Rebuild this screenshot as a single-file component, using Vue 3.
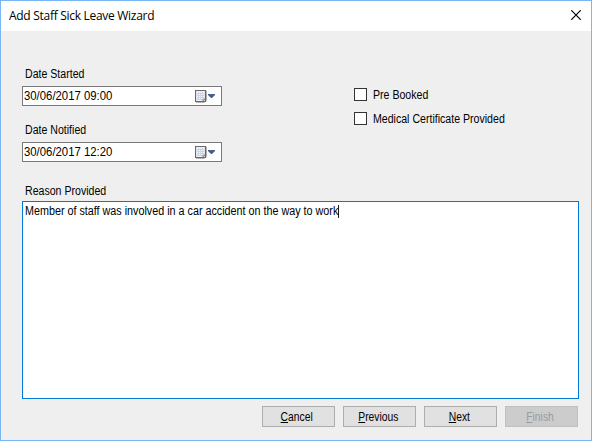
<script setup>
import { ref } from 'vue'

const dates = [
  { label: 'Date Started', value: '30/06/2017 09:00' },
  { label: 'Date Notified', value: '30/06/2017 12:20' },
]
const checks = ['Pre Booked', 'Medical Certificate Provided']
const buttons = [
  { key: 'C', rest: 'ancel' },
  { key: 'P', rest: 'revious' },
  { key: 'N', rest: 'ext' },
  { key: 'F', rest: 'inish', disabled: true },
]
const reason = ref('Member of staff was involved in a car accident on the way to work')
const dots = [0, 1, 2, 3].flatMap((r) => [0, 1, 2, 3].map((c) => ({ x: 2 + c * 2, y: 2 + r * 2 })))
</script>

<template>
  <div class="window">
    <header class="titlebar">
      <span class="title">Add Staff Sick Leave Wizard</span>
      <svg class="close" width="10" height="10" viewBox="0 0 10 10">
        <path d="M0.2 0.2L9.8 9.8M9.8 0.2L0.2 9.8" stroke="#000" stroke-width="1.2" />
      </svg>
    </header>
    <main class="body">
      <div class="top">
        <div class="dates">
          <div v-for="d in dates" :key="d.label" class="field">
            <label class="label"><span class="narrow">{{ d.label }}</span></label>
            <div class="datebox">
              <span class="value">{{ d.value }}</span>
              <svg class="cal" width="12" height="13" viewBox="0 0 12 13">
                <path d="M1 12.5H9.5L11.5 10.5V1" fill="none" stroke="#b9b5b5" />
                <path d="M0.5 0.5H10.5V11.5H0.5Z" fill="#eef1f7" stroke="#6f6766" stroke-width="1.2" />
                <rect x="2" y="2" width="7" height="8" fill="#cdd4e2" />
                <rect v-for="(p, i) in dots" :key="i" :x="p.x" :y="p.y" width="1" height="1" fill="#f6f8fc" />
                <path d="M8 11V9H10Z" fill="#fff" stroke="#6f6766" stroke-width="0.6" />
              </svg>
              <svg class="arrow" width="7" height="4" viewBox="0 0 7 4">
                <path d="M0 0H7V1L4 4H3L0 1Z" fill="#465f8c" />
              </svg>
            </div>
          </div>
        </div>
        <div class="checks">
          <div v-for="c in checks" :key="c" class="check">
            <span class="box"></span>
            <span class="narrow">{{ c }}</span>
          </div>
        </div>
      </div>
      <label class="label reason-label"><span class="narrow">Reason Provided</span></label>
      <div class="textarea"><span class="reason narrow">{{ reason }}<i class="caret"></i></span></div>
      <footer class="actions">
        <button v-for="b in buttons" :key="b.key" class="btn" :disabled="b.disabled">
          <span class="caption"><span class="key">{{ b.key }}</span>{{ b.rest }}</span>
        </button>
      </footer>
    </main>
  </div>
</template>

<style>
body {
  margin: 0;
}
</style>

<style scoped>
.window {
  box-sizing: border-box;
  width: 592px;
  height: 441px;
  border: 1px solid #7ab5f5;
  background: #efefef;
  font: 12px/14px "Liberation Sans", Arial, sans-serif;
  color: #000;
  white-space: nowrap;
}
.titlebar {
  display: flex;
  align-items: center;
  justify-content: space-between;
  height: 30px;
  padding: 0 10px 0 8px;
  box-sizing: border-box;
  background: #fff;
}
.title {
  font: 12px/16px "Open Sans", "Noto Sans", sans-serif;
  letter-spacing: -0.29px;
}
.close {
  margin-top: -2px;
}
.body {
  padding: 36px 12px 0 21px;
}
.narrow {
  display: inline-block;
  transform: scaleX(0.882);
  transform-origin: 0 50%;
}
.top {
  display: flex;
}
.dates {
  width: 200px;
}
.field {
  height: 56px;
}
.label {
  display: block;
  height: 19px;
  padding-left: 3px;
}
.datebox {
  display: flex;
  align-items: center;
  box-sizing: border-box;
  height: 20px;
  border: 1px solid #7a7a7a;
  background: #fff;
  padding: 0 6px 0 1px;
}
.value {
  flex: 1;
  transform: scaleX(0.945);
  transform-origin: 0 50%;
}
.cal {
  margin-right: 1px;
}
.checks {
  display: flex;
  flex-direction: column;
  gap: 11px;
  padding: 21px 0 0 132px;
}
.check {
  display: flex;
  align-items: center;
  gap: 6px;
  height: 13px;
}
.box {
  box-sizing: border-box;
  width: 13px;
  height: 13px;
  border: 1px solid #333;
  background: #fff;
}
.reason-label {
  height: 17px;
  margin-top: 5px;
}
.textarea {
  display: flex;
  box-sizing: border-box;
  height: 198px;
  border: 1px solid #0078d7;
  background: #fff;
  padding: 2px;
}
.reason {
  height: 14px;
  transform: scaleX(0.897);
}
.caret {
  display: inline-block;
  width: 1.1px;
  height: 13px;
  vertical-align: top;
  margin-top: 1px;
  background: #000;
}
.actions {
  display: flex;
  justify-content: flex-end;
  gap: 8px;
  padding: 7px 1px 0 0;
}
.btn {
  box-sizing: border-box;
  width: 73px;
  height: 21px;
  padding: 0 3px 0 0;
  border: 1px solid #adadad;
  background: #e1e1e1;
  font: inherit;
  color: #000;
}
.btn:disabled {
  border-color: #bfbfbf;
  background: #cccccc;
  color: #9b9b9b;
}
.caption {
  display: inline-block;
  transform: scaleX(0.86);
}
.key {
  text-decoration: underline;
  text-underline-offset: 1px;
}
</style>
